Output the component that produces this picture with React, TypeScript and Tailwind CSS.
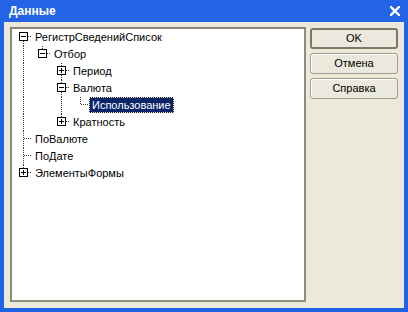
import React from "react";

type Row = {
  text: string;
  level: number;
  guides: boolean[];
  up: boolean;
  down: boolean;
  box?: "plus" | "minus";
  selected?: boolean;
};

const rows: Row[] = [
  { text: "РегистрСведенийСписок", level: 0, guides: [], up: false, down: true, box: "minus" },
  { text: "Отбор", level: 1, guides: [true], up: true, down: false, box: "minus" },
  { text: "Период", level: 2, guides: [true, false], up: true, down: true, box: "plus" },
  { text: "Валюта", level: 2, guides: [true, false], up: true, down: true, box: "minus" },
  { text: "Использование", level: 3, guides: [true, false, true], up: true, down: false, selected: true },
  { text: "Кратность", level: 2, guides: [true, false], up: true, down: false, box: "plus" },
  { text: "ПоВалюте", level: 0, guides: [], up: true, down: true },
  { text: "ПоДате", level: 0, guides: [], up: true, down: true },
  { text: "ЭлементыФормы", level: 0, guides: [], up: true, down: false, box: "plus" },
];

const LINE = "#3a3a3a";
const CY = 7.5;

function GuideCell({ on }: { on: boolean }) {
  return (
    <svg width="19" height="17" className="block shrink-0" shapeRendering="crispEdges">
      {on && <line x1="10.5" y1="0" x2="10.5" y2="17" stroke={LINE} strokeDasharray="1 1" />}
    </svg>
  );
}

function OwnCell({ row }: { row: Row }) {
  return (
    <svg width="19" height="17" className="block shrink-0" shapeRendering="crispEdges">
      {row.up && <line x1="10.5" y1="0" x2="10.5" y2={CY} stroke={LINE} strokeDasharray="1 1" />}
      {row.down && <line x1="10.5" y1={CY} x2="10.5" y2="17" stroke={LINE} strokeDasharray="1 1" />}
      <line x1="11" y1={CY} x2="19" y2={CY} stroke={LINE} strokeDasharray="1 1" />
      {row.box && (
        <g>
          <rect x="6.5" y={CY - 4} width="8" height="8" fill="#ffffff" stroke="#000000" />
          <line x1="8" y1={CY} x2="13" y2={CY} stroke="#000000" />
          {row.box === "plus" && <line x1="10.5" y1={CY - 2.5} x2="10.5" y2={CY + 2.5} stroke="#000000" />}
        </g>
      )}
    </svg>
  );
}

function TreeRow({ row }: { row: Row }) {
  return (
    <div className="flex h-[17px] items-start">
      {row.guides.map((g, i) => (
        <GuideCell key={i} on={g} />
      ))}
      <OwnCell row={row} />
      <div
        className={
          row.selected
            ? "h-[16px] px-[2px] leading-[15px] bg-[#0a246a] text-white border border-dotted border-[#f5db95] whitespace-nowrap"
            : "h-[16px] px-[2px] leading-[15px] text-black border border-transparent whitespace-nowrap"
        }
      >
        {row.text}
      </div>
    </div>
  );
}

function Btn({ label, def }: { label: string; def?: boolean }) {
  return (
    <div
      className={
        def
          ? "h-[21px] w-[88px] flex items-center justify-center rounded-[3px] border-2 border-[#7a776b] bg-[#ebe8dd] text-black font-normal"
          : "h-[21px] w-[88px] flex items-center justify-center rounded-[3px] border border-[#9e9b8f] bg-[#ebe8dd] text-black font-normal shadow-[inset_1px_1px_0_#ffffff]"
      }
    >
      {label}
    </div>
  );
}

export default function App() {
  return (
    <div
      className="w-[408px] h-[312px] flex flex-col bg-[#2163e3] overflow-hidden"
      style={{ fontFamily: '"Liberation Sans", Arial, sans-serif' }}
    >
      <div className="h-[22px] shrink-0 flex items-center justify-between pl-[9px] pr-[8px] bg-[#2364e6]">
        <span className="text-white font-bold text-[12px] leading-none">Данные</span>
        <svg width="10" height="10" viewBox="0 0 10 10" className="block">
          <path d="M1 1 L9 9 M9 1 L1 9" stroke="#ffffff" strokeWidth="2.4" strokeLinecap="square" />
        </svg>
      </div>
      <div className="flex-1 flex border-x-4 border-b-4 border-[#1f62e4] min-h-0">
        <div className="flex-1 flex gap-[4px] bg-[#ece9d8] pl-[6px] pr-[6px] pt-[5px] pb-[6px] text-[11px]">
          <div className="w-[296px] bg-white border-2 border-t-[#8a877b] border-l-[#8a877b] border-r-[#8f8c80] border-b-[#8f8c80] pl-[1px]">
            {rows.map((r, i) => (
              <TreeRow key={i} row={r} />
            ))}
          </div>
          <div className="flex flex-col gap-[4px] pt-[1px]">
            <Btn label="OK" def />
            <Btn label="Отмена" />
            <Btn label="Справка" />
          </div>
        </div>
      </div>
    </div>
  );
}
